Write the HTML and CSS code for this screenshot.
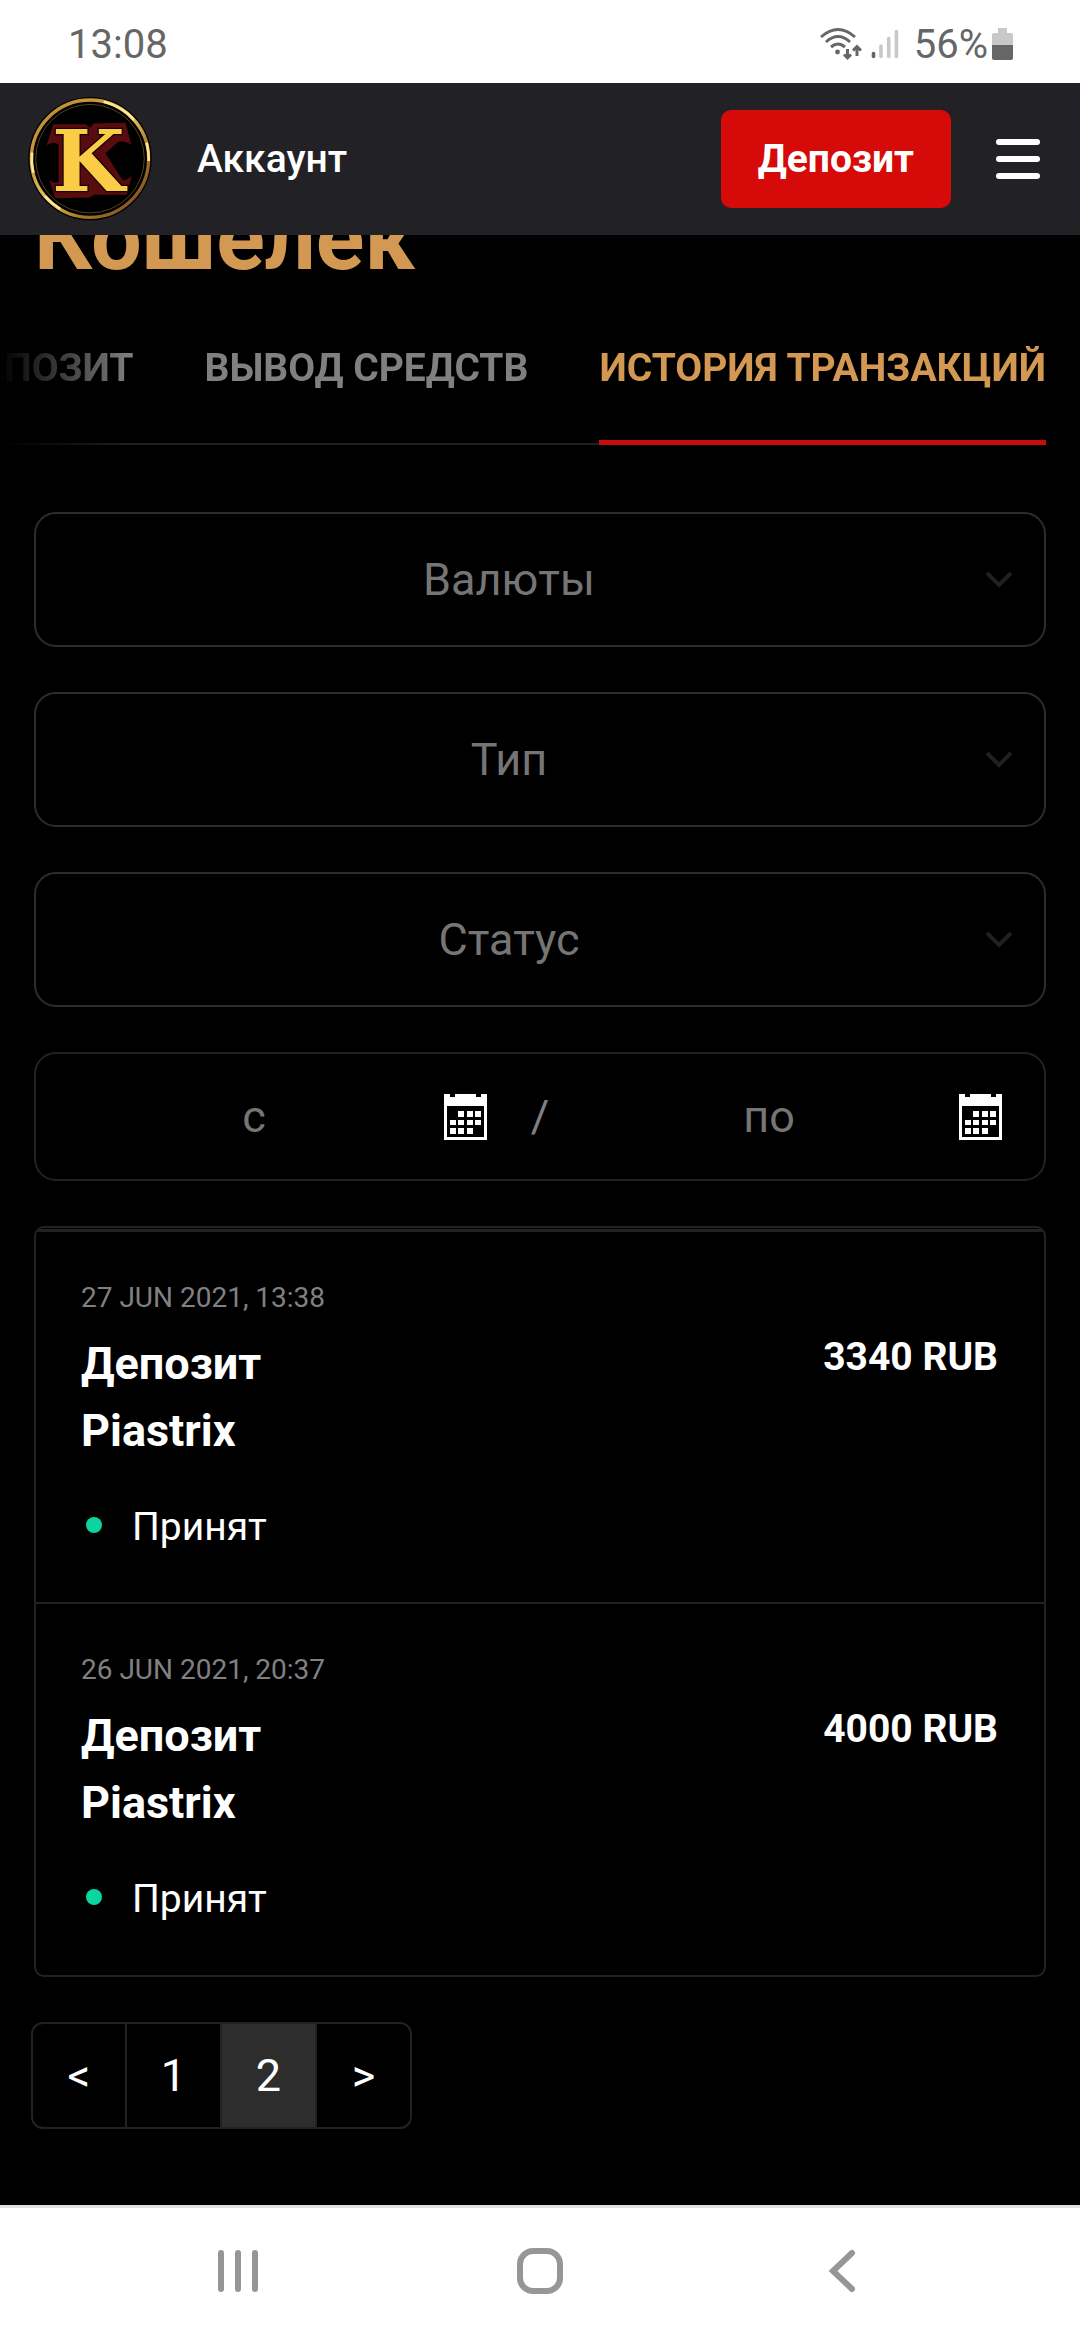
FILE: index.html
```html
<!DOCTYPE html>
<html lang="ru">
<head>
  <meta charset="utf-8">
  <meta name="viewport" content="width=device-width, initial-scale=1">
  <title>Кошелек</title>
  <link rel="stylesheet" href="styles.css">
</head>
<body>
  <div class="status-bar">
    <span class="status-time">13:08</span>
    <div class="status-icons">
      <svg class="icon-wifi" viewBox="0 0 42 34" width="42" height="34" aria-hidden="true">
        <g fill="none" stroke="#666" stroke-width="3">
          <path d="M1 10Q18 -5 35 10"/>
          <path d="M6 15Q18 4 30 15"/>
          <path d="M11 20Q18 14 25 20"/>
          <path d="M27.500 22V31M24 27.500l3.500 3.500l3.500 -3.500"/>
          <path d="M37 29V20M33 23.500l4 -4l4 4"/>
        </g>
        <circle cx="17.500" cy="25" r="2.400" fill="#666"/>
      </svg>
      <svg class="icon-signal" viewBox="0 0 28 30" width="28" height="30" aria-hidden="true">
        <g stroke-width="3.600" stroke-linecap="round">
          <path stroke="#666" d="M2.500 24.500V27.500"/>
          <path stroke="#c8c8c8" d="M10 17V27.500M17.700 9.500V27.500M25.400 2.500V27.500"/>
        </g>
      </svg>
      <span class="status-charge">56%</span>
      <svg viewBox="0 0 21 32" width="21" height="32" aria-hidden="true">
        <path fill="#c8c8c8" d="M6 0h9v5h4a2 2 0 0 1 2 2v10H0V7a2 2 0 0 1 2-2h4z"/>
        <path fill="#666" d="M0 17h21v13a2 2 0 0 1-2 2H2a2 2 0 0 1-2-2z"/>
      </svg>
    </div>
  </div>

  <header class="header">
    <a class="logo" href="#" aria-label="На главную">
      <svg viewBox="24 24 370 370" width="124" height="124" aria-hidden="true">
        <defs>
          <linearGradient id="gold" x1="0" y1="0" x2="1" y2="1">
            <stop offset="0" stop-color="#b98a2c"/>
            <stop offset=".3" stop-color="#c89a3c"/>
            <stop offset=".5" stop-color="#e6c765"/>
            <stop offset=".7" stop-color="#a87628"/>
            <stop offset="1" stop-color="#6e431c"/>
          </linearGradient>
        </defs>
        <circle cx="209" cy="208" r="184" fill="#000"/>
        <circle cx="209" cy="208" r="175" fill="none" stroke="url(#gold)" stroke-width="10"/>
        <path d="M250 38A175 175 0 0 1 340 92M378 160A175 175 0 0 1 384 215M36 190A175 175 0 0 0 40 250M75 320A175 175 0 0 0 120 358" fill="none" stroke="#fbe793" stroke-width="8"/>
        <circle cx="209" cy="208" r="162" fill="none" stroke="#7b622d" stroke-width="2"/>
        <path fill="#580c0e" d="M99 105H197L209 116L220 103L315 101L332 166Q304 152 291 160L255 192L302 266Q310 282 334 258L319 316H222L208 324L106 326L87 270Q100 284 115 278V166Q101 154 80 168Z"/>
        <text x="204" y="304" text-anchor="middle" class="logo-letter">K</text>
      </svg>
    </a>
    <a class="header-link" href="#">Аккаунт</a>
    <button class="deposit" type="button">Депозит</button>
    <button class="menu" type="button" aria-label="Меню">
      <span></span><span></span><span></span>
    </button>
  </header>

  <main class="wallet">
    <h1 class="title">Кошелек</h1>

    <nav class="tabs" aria-label="Кошелек">
      <a class="tab" href="#">ДЕПОЗИТ</a>
      <a class="tab" href="#">ВЫВОД СРЕДСТВ</a>
      <a class="tab tab-active" href="#" aria-current="page">ИСТОРИЯ ТРАНЗАКЦИЙ</a>
    </nav>

    <form class="filters">
      <div class="field">
        <select class="select" aria-label="Валюты"><option>Валюты</option></select>
        <svg class="chevron" viewBox="0 0 28 18" width="28" height="18" aria-hidden="true"><path d="M2 2L14 14L26 2"/></svg>
      </div>
      <div class="field">
        <select class="select" aria-label="Тип"><option>Тип</option></select>
        <svg class="chevron" viewBox="0 0 28 18" width="28" height="18" aria-hidden="true"><path d="M2 2L14 14L26 2"/></svg>
      </div>
      <div class="field">
        <select class="select" aria-label="Статус"><option>Статус</option></select>
        <svg class="chevron" viewBox="0 0 28 18" width="28" height="18" aria-hidden="true"><path d="M2 2L14 14L26 2"/></svg>
      </div>
      <div class="dates">
        <label class="date">
          <input class="date-input" type="text" placeholder="с" aria-label="Дата с">
          <svg class="calendar" viewBox="0 0 43 46" width="43" height="46" aria-hidden="true">
            <path fill="#fff" fill-rule="evenodd" d="M0 0h6v3h5V0h21v3h5V0h6v46H0zM3 12v31h37V12z"/>
            <path fill="#fff" d="M14 17h6v6h-6zM23 17h6v6h-6zM31 17h6v6h-6zM6 26h6v5H6zM14 26h6v5h-6zM23 26h6v5h-6zM31 26h6v5h-6zM6 34h6v6H6zM14 34h6v6h-6zM23 34h6v6h-6z"/>
          </svg>
        </label>
        <span class="slash">/</span>
        <label class="date">
          <input class="date-input" type="text" placeholder="по" aria-label="Дата по">
          <svg class="calendar" viewBox="0 0 43 46" width="43" height="46" aria-hidden="true">
            <path fill="#fff" fill-rule="evenodd" d="M0 0h6v3h5V0h21v3h5V0h6v46H0zM3 12v31h37V12z"/>
            <path fill="#fff" d="M14 17h6v6h-6zM23 17h6v6h-6zM31 17h6v6h-6zM6 26h6v5H6zM14 26h6v5h-6zM23 26h6v5h-6zM31 26h6v5h-6zM6 34h6v6H6zM14 34h6v6h-6zM23 34h6v6h-6z"/>
          </svg>
        </label>
      </div>
    </form>

    <ul class="history">
      <li class="entry">
        <time class="entry-date">27 JUN 2021, 13:38</time>
        <div class="entry-name">Депозит<br>Piastrix</div>
        <div class="entry-amount">3340 RUB</div>
        <div class="entry-status">Принят</div>
      </li>
      <li class="entry">
        <time class="entry-date">26 JUN 2021, 20:37</time>
        <div class="entry-name">Депозит<br>Piastrix</div>
        <div class="entry-amount">4000 RUB</div>
        <div class="entry-status">Принят</div>
      </li>
    </ul>

    <nav class="pages" aria-label="Страницы">
      <button class="page" type="button">&lt;</button>
      <button class="page" type="button">1</button>
      <button class="page page-active" type="button" aria-current="page">2</button>
      <button class="page" type="button">&gt;</button>
    </nav>
  </main>

  <nav class="system-nav" aria-label="Система">
    <button type="button" aria-label="Недавние">
      <svg viewBox="0 0 48 48" width="48" height="48"><path d="M7 6V42M24 6V42M41 6V42"/></svg>
    </button>
    <button type="button" aria-label="Домой">
      <svg viewBox="0 0 48 48" width="48" height="48"><rect x="4" y="4" width="40" height="40" rx="13"/></svg>
    </button>
    <button type="button" aria-label="Назад">
      <svg viewBox="0 0 48 48" width="48" height="48"><path d="M34 6L15 24L34 42"/></svg>
    </button>
  </nav>
</body>
</html>
```
FILE: styles.css
```css
* {
  box-sizing: border-box;
}

body {
  margin: 0;
  min-height: 100vh;
  display: flex;
  flex-direction: column;
  background: #000;
  color: #fff;
  font-family: Roboto, sans-serif;
  font-size: 40px;
}

a {
  color: inherit;
  text-decoration: none;
}

button,
input,
select {
  margin: 0;
  padding: 0;
  border: 0;
  background: none;
  color: inherit;
  font: inherit;
}

svg {
  display: block;
  flex: none;
}

/* Phone status bar */
.status-bar {
  height: 83px;
  padding: 5px 67px 0 68px;
  display: flex;
  align-items: center;
  justify-content: space-between;
  background: #fff;
  color: #666;
}

.status-icons {
  display: flex;
  align-items: center;
}

.icon-wifi {
  margin-right: 9px;
}

.icon-signal {
  margin-right: 15px;
}

.status-charge {
  margin-right: 4px;
}

/* Site header */
.header {
  position: relative;
  z-index: 1;
  height: 152px;
  padding: 0 40px 0 28px;
  display: flex;
  align-items: center;
  background: #222126;
}

.logo-letter {
  font-family: "DejaVu Serif", serif;
  font-weight: 700;
  font-size: 250px;
  fill: #fbcd46;
  stroke: #180404;
  stroke-width: 8px;
  paint-order: stroke;
}

.header-link {
  margin-left: 45px;
  margin-right: auto;
  font-weight: 500;
  font-size: 39px;
}

.deposit {
  height: 98px;
  padding: 0 37px;
  border-radius: 10px;
  background: #d50a09;
  font-weight: 700;
  font-size: 39px;
}

.menu {
  width: 44px;
  margin-left: 45px;
  display: flex;
  flex-direction: column;
  gap: 11px;
}

.menu span {
  height: 6px;
  border-radius: 3px;
  background: #fff;
}

/* Wallet page */
.wallet {
  flex: 1;
  padding: 0 34px 76px;
}

.title {
  margin: -41px 0 59px;
  font-size: 90px;
  line-height: 90px;
  font-weight: 700;
  color: #d39952;
}

.tabs {
  margin: 0 0 67px -34px;
  display: flex;
  justify-content: flex-end;
  overflow: hidden;
  gap: 71px;
  box-shadow: inset 0 -2px #202022;
  color: #808082;
  font-size: 39px;
  line-height: 50px;
  font-weight: 700;
  white-space: nowrap;
  -webkit-mask-image: linear-gradient(to right, transparent, #000 132px);
  mask-image: linear-gradient(to right, transparent, #000 132px);
}

.tab {
  flex: none;
  padding-bottom: 47px;
  border-bottom: 5px solid transparent;
}

.tab-active {
  border-bottom-color: #cc0c0c;
  color: #d39952;
}

.filters {
  display: grid;
  grid-template-columns: minmax(0, 1fr);
  gap: 45px;
  margin-bottom: 45px;
  color: #757575;
  font-size: 45px;
}

.field {
  display: grid;
  grid-template-columns: minmax(0, 1fr);
  align-items: center;
}

.select {
  grid-area: 1 / 1;
  width: 100%;
  height: 135px;
  padding: 0 94px 0 32px;
  border: 2px solid #2d2d2e;
  border-radius: 22px;
  appearance: none;
  text-align: center;
  text-align-last: center;
}

.chevron {
  grid-area: 1 / 1;
  justify-self: end;
  margin-right: 33px;
  fill: none;
  stroke: #202021;
  stroke-width: 4px;
  pointer-events: none;
}

.dates {
  height: 129px;
  padding: 0 28px;
  display: flex;
  align-items: center;
  border: 2px solid #222226;
  border-radius: 22px;
}

.date {
  flex: 1;
  min-width: 0;
  display: flex;
  align-items: center;
}

.date-input {
  flex: 1;
  min-width: 0;
  text-align: center;
}

.date-input::placeholder {
  color: #757575;
  opacity: 1;
}

.calendar {
  margin-right: 14px;
}

.slash {
  width: 78px;
  text-align: center;
  color: #808082;
}

/* Transactions */
.history {
  margin: 0 0 45px;
  padding: 1px 0;
  border: 2px solid #222226;
  border-radius: 10px;
  overflow: hidden;
  list-style: none;
}

.entry {
  display: grid;
  grid-template-columns: 1fr auto;
  padding: 46px 46px 51px 45px;
  border-top: 2px solid #222226;
}

.entry:first-child {
  border-top-width: 3px;
}

.entry-date {
  grid-column: 1 / 3;
  margin-bottom: 12px;
  font-size: 28px;
  line-height: 40px;
  color: #808082;
}

.entry-name {
  font-size: 45px;
  line-height: 67px;
  font-weight: 700;
}

.entry-amount {
  font-size: 39px;
  line-height: 54px;
  font-weight: 700;
}

.entry-status {
  grid-column: 1 / 3;
  margin-top: 39px;
  display: flex;
  align-items: center;
  font-size: 39px;
  line-height: 48px;
}

.entry-status::before {
  content: "";
  width: 16px;
  height: 16px;
  margin: 0 30px 4px 5px;
  border-radius: 50%;
  background: #0ad5a0;
}

/* Pagination */
.pages {
  width: max-content;
  margin-left: -3px;
  display: flex;
  border: 2px solid #222224;
  border-radius: 12px;
  overflow: hidden;
  font-size: 45px;
}

.page {
  width: 92px;
  height: 103px;
}

.page + .page {
  width: 95px;
  border-left: 2px solid #222224;
}

.page-active {
  background: #2d2d2d;
}

/* Phone navigation bar */
.system-nav {
  height: 135px;
  padding: 0 87px 6px;
  display: grid;
  grid-template-columns: repeat(3, 1fr);
  align-items: center;
  justify-items: center;
  border-top: 3px solid #e1e1e1;
  background: #fff;
}

.system-nav svg {
  fill: none;
  stroke: #969696;
  stroke-width: 6px;
  stroke-linecap: round;
}
```
